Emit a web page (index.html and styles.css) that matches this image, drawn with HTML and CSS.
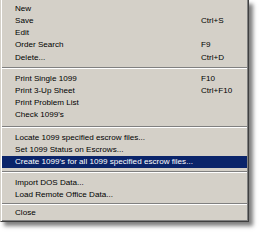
FILE: index.html
```html
<!DOCTYPE html>
<html>
<head>
<meta charset="utf-8">
<link rel="stylesheet" href="styles.css">
</head>
<body>
<div class="menu">
  <div class="item"><span>New</span></div>
  <div class="item"><span>Save</span><span class="key">Ctrl+S</span></div>
  <div class="item"><span>Edit</span></div>
  <div class="item"><span>Order Search</span><span class="key">F9</span></div>
  <div class="item"><span>Delete...</span><span class="key">Ctrl+D</span></div>
  <div class="sep sep-1"></div>
  <div class="item"><span>Print Single 1099</span><span class="key">F10</span></div>
  <div class="item"><span>Print 3-Up Sheet</span><span class="key">Ctrl+F10</span></div>
  <div class="item"><span>Print Problem List</span></div>
  <div class="item"><span>Check 1099's</span></div>
  <div class="sep sep-2"></div>
  <div class="item"><span>Locate 1099 specified escrow files...</span></div>
  <div class="item"><span>Set 1099 Status on Escrows...</span></div>
  <div class="item active"><span>Create 1099's for all 1099 specified escrow files...</span></div>
  <div class="sep sep-3"></div>
  <div class="item"><span>Import DOS Data...</span></div>
  <div class="item"><span>Load Remote Office Data...</span></div>
  <div class="sep sep-4"></div>
  <div class="item"><span>Close</span></div>
</div>
</body>
</html>
```
FILE: styles.css
```css
html, body {
  margin: 0;
  padding: 0;
  background: #ffffff;
}
body {
  width: 259px;
  height: 232px;
  overflow: hidden;
}
.menu {
  box-sizing: border-box;
  width: 249px;
  background: #d4d0c8;
  border-style: solid;
  border-width: 0 1px 1px 1px;
  border-color: #d4d0c8 #404040 #404040 #d4d0c8;
  box-shadow: inset 1px 0 #ffffff, inset -1px -1px #808080, 4px 4px 4px rgba(0, 0, 0, 0.5);
  padding: 3.2px 1px 2px 1px;
  font-family: "Liberation Sans", Arial, sans-serif;
  font-size: 8.1px;
  color: #000000;
}
.item {
  display: grid;
  grid-template-columns: 186px auto;
  height: 12.1px;
  line-height: 12.1px;
  padding-left: 13px;
  white-space: nowrap;
}
.item.active {
  background: #0a246a;
  color: #ffffff;
}
.sep {
  display: flex;
  flex-direction: column;
  justify-content: center;
}
.sep::before {
  content: "";
  display: block;
  height: 1px;
  background: #808080;
  border-bottom: 1px solid #ffffff;
}
.sep-1 { height: 9.5px; }
.sep-2 { height: 10.5px; }
.sep-3 { height: 8.2px; }
.sep-4 { height: 6.4px; }
```
